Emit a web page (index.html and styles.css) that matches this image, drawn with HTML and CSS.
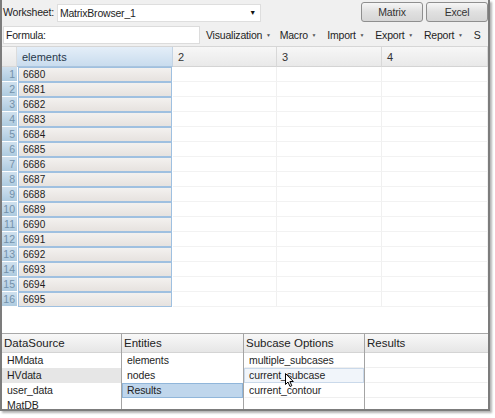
FILE: index.html
```html
<!DOCTYPE html>
<html>
<head>
<meta charset="utf-8">
<link rel="stylesheet" href="styles.css">
</head>
<body>
<div class="window">
  <div class="bar1">
    <span class="label">Worksheet:</span>
    <div class="combo"><span>MatrixBrowser_1</span><span class="combo-arrow">▼</span></div>
    <div class="fill"></div>
    <div class="btn">Matrix</div>
    <div class="btn">Excel</div>
  </div>
  <div class="bar2">
    <div class="formula">Formula:</div>
    <div class="menus">
      <span class="menu">Visualization <i>▼</i></span>
      <span class="menu">Macro <i>▼</i></span>
      <span class="menu">Import <i>▼</i></span>
      <span class="menu">Export <i>▼</i></span>
      <span class="menu">Report <i>▼</i></span>
      <span class="menu">S</span>
    </div>
  </div>
  <div class="grid">
    <div class="grow head">
      <div class="corner"></div>
      <div class="hcell sel">elements</div>
      <div class="hcell">2</div>
      <div class="hcell">3</div>
      <div class="hcell">4</div>
    </div>
    <div class="grow"><div class="rh">1</div><div class="ec">6680</div><div class="c"></div><div class="c"></div><div class="c"></div></div>
    <div class="grow"><div class="rh">2</div><div class="ec">6681</div><div class="c"></div><div class="c"></div><div class="c"></div></div>
    <div class="grow"><div class="rh">3</div><div class="ec">6682</div><div class="c"></div><div class="c"></div><div class="c"></div></div>
    <div class="grow"><div class="rh">4</div><div class="ec">6683</div><div class="c"></div><div class="c"></div><div class="c"></div></div>
    <div class="grow"><div class="rh">5</div><div class="ec">6684</div><div class="c"></div><div class="c"></div><div class="c"></div></div>
    <div class="grow"><div class="rh">6</div><div class="ec">6685</div><div class="c"></div><div class="c"></div><div class="c"></div></div>
    <div class="grow"><div class="rh">7</div><div class="ec">6686</div><div class="c"></div><div class="c"></div><div class="c"></div></div>
    <div class="grow"><div class="rh">8</div><div class="ec">6687</div><div class="c"></div><div class="c"></div><div class="c"></div></div>
    <div class="grow"><div class="rh">9</div><div class="ec">6688</div><div class="c"></div><div class="c"></div><div class="c"></div></div>
    <div class="grow"><div class="rh">10</div><div class="ec">6689</div><div class="c"></div><div class="c"></div><div class="c"></div></div>
    <div class="grow"><div class="rh">11</div><div class="ec">6690</div><div class="c"></div><div class="c"></div><div class="c"></div></div>
    <div class="grow"><div class="rh">12</div><div class="ec">6691</div><div class="c"></div><div class="c"></div><div class="c"></div></div>
    <div class="grow"><div class="rh">13</div><div class="ec">6692</div><div class="c"></div><div class="c"></div><div class="c"></div></div>
    <div class="grow"><div class="rh">14</div><div class="ec">6693</div><div class="c"></div><div class="c"></div><div class="c"></div></div>
    <div class="grow"><div class="rh">15</div><div class="ec">6694</div><div class="c"></div><div class="c"></div><div class="c"></div></div>
    <div class="grow"><div class="rh">16</div><div class="ec">6695</div><div class="c"></div><div class="c"></div><div class="c"></div></div>
  </div>
  <div class="panel">
    <div class="col c1">
      <div class="ph">DataSource</div>
      <div class="item">HMdata</div>
      <div class="item gray">HVdata</div>
      <div class="item">user_data</div>
      <div class="item">MatDB</div>
    </div>
    <div class="col c2">
      <div class="ph">Entities</div>
      <div class="item">elements</div>
      <div class="item">nodes</div>
      <div class="item selected">Results</div>
    </div>
    <div class="col c3">
      <div class="ph">Subcase Options</div>
      <div class="item line">multiple_subcases</div>
      <div class="item line hover">current_subcase
        <svg class="cursor" width="10" height="15" viewBox="0 0 10 15"><path d="M0.5 0.5 L0.5 11.5 L3 9 L5 13.5 L6.8 12.7 L4.9 8.5 L8.3 8.5 Z" fill="#fff" stroke="#000" stroke-width="1" stroke-linejoin="round"/></svg>
      </div>
      <div class="item line">current_contour</div>
    </div>
    <div class="col c4">
      <div class="ph">Results</div>
      <div class="item line"></div>
      <div class="item line"></div>
      <div class="item line"></div>
    </div>
  </div>
</div>
</body>
</html>
```
FILE: styles.css
```css
* { box-sizing: border-box; }
html, body { margin: 0; padding: 0; background: #ffffff; }
body {
  font-family: "Liberation Sans", Arial, sans-serif;
  font-size: 10px;
  color: #1e1e1e;
  width: 495px;
  height: 418px;
  overflow: hidden;
}
.window {
  width: 490px;
  height: 411px;
  background: #f0f0f0;
  border-left: 2px solid #7c7c7c;
  border-right: 2px solid #7c7c7c;
  border-bottom: 2px solid #7c7c7c;
  box-shadow: 2px 2px 2px rgba(0,0,0,0.3);
  display: flex;
  flex-direction: column;
  position: relative;
  overflow: hidden;
}
.bar1 {
  height: 24px;
  flex-shrink: 0;
  display: flex;
  align-items: center;
  padding: 0 0 0 1px;
  gap: 3px;
}
.label { font-size: 10.5px; letter-spacing: -0.2px; }
.combo {
  width: 204px;
  height: 18px;
  background: #fff;
  border: 1px solid #dedede;
  display: flex;
  align-items: center;
  justify-content: space-between;
  padding: 0 4px 0 2px;
  font-size: 10.5px;
  letter-spacing: -0.2px;
  margin-top: 1px;
}
.combo-arrow { font-size: 7px; color: #111; }
.fill { flex: 1; }
.btn {
  width: 62px;
  height: 20px;
  border: 1px solid #8f8f8f;
  border-radius: 3px;
  background: linear-gradient(#f6f6f6, #e0e0e0 50%, #d6d6d6);
  display: flex;
  align-items: center;
  justify-content: center;
  font-size: 10.5px;
  letter-spacing: -0.2px;
  color: #333;
}
.bar2 {
  height: 22px;
  flex-shrink: 0;
  display: flex;
  align-items: center;
  padding-left: 1px;
}
.formula {
  width: 197px;
  height: 18px;
  background: #fff;
  border: 1px solid #dcdcdc;
  display: flex;
  align-items: center;
  padding-left: 2px;
  font-size: 10.5px;
  letter-spacing: -0.2px;
}
.menus {
  display: flex;
  align-items: center;
  padding-left: 6px;
  gap: 11px;
  font-size: 10.5px;
  letter-spacing: -0.2px;
  white-space: nowrap;
}
.menus .menu:first-child { margin-right: -2px; }
.menu i { font-style: normal; font-size: 5px; color: #555; vertical-align: 2px; margin-left: 1px; }
.grid {
  background: #fff;
  height: 287px;
  flex-shrink: 0;
  border-top: 1px solid #d6d6d6;
  display: flex;
  flex-direction: column;
}
.grow {
  display: grid;
  grid-template-columns: 15px 156px 104px 105px 106px;
  height: 15px;
}
.grow.head { height: 20px; }
.corner { background: linear-gradient(#f6f6f6, #e8e8e8); border-bottom: 1px solid #d8d8d8; border-right: 1px solid #dcdcdc; }
.hcell {
  background: linear-gradient(#f7f7f7, #e9e9e9);
  border-bottom: 1px solid #d4d4d4;
  border-right: 1px solid #d8d8d8;
  font-size: 11px;
  padding: 4px 0 0 5px;
  color: #333;
}
.hcell.sel {
  background: linear-gradient(#e4eef8, #c9dcee);
  border-bottom: 1px solid #a9c4de;
  border-right: 1px solid #c4d4e4;
  color: #27384a;
}
.rh {
  background: linear-gradient(#cfe0ee, #aecbe0);
  border-bottom: 1px solid #ffffff;
  color: #7391aa;
  text-align: right;
  padding-right: 2px;
  font-size: 10.5px;
  line-height: 14px;
}
.ec {
  margin: 0 1px 0 1px;
  border: 1px solid #9fc0e0;
  background: linear-gradient(#f3f1ef, #e6e2df);
  padding-left: 4px;
  line-height: 13px;
  font-size: 10px;
}
.c {
  border-right: 1px solid #f0f0f0;
  border-bottom: 1px solid #f2f2f2;
}
.panel {
  flex: 1;
  display: grid;
  grid-template-columns: 120px 122px 121px 123px;
  grid-template-rows: 100%;
  background: #fff;
  border-top: 1px solid #a8a8a8;
  min-height: 0;
}
.col { border-right: 1px solid #a4a4a4; display: flex; flex-direction: column; }
.col.c4 { border-right: none; }
.ph {
  height: 19px;
  flex-shrink: 0;
  background: linear-gradient(#f8f8f8, #e6e6e6);
  border-bottom: 1px solid #d4d4d4;
  font-size: 11.5px;
  padding: 3px 0 0 2px;
  color: #222;
}
.item {
  height: 15px;
  flex-shrink: 0;
  line-height: 13px;
  padding-left: 4px;
  font-size: 10.5px;
  letter-spacing: -0.1px;
  border: 1px solid transparent;
  position: relative;
}
.item.line { border-bottom-color: #efefef; }
.item.gray { background: #e6e6e6; }
.item.selected { background: #bfd6ec; border-color: #90b6da; }
.item.hover { background: #f1f5fa; border-color: #cad9ea; }
.cursor { position: absolute; left: 40px; top: 4px; }
```
